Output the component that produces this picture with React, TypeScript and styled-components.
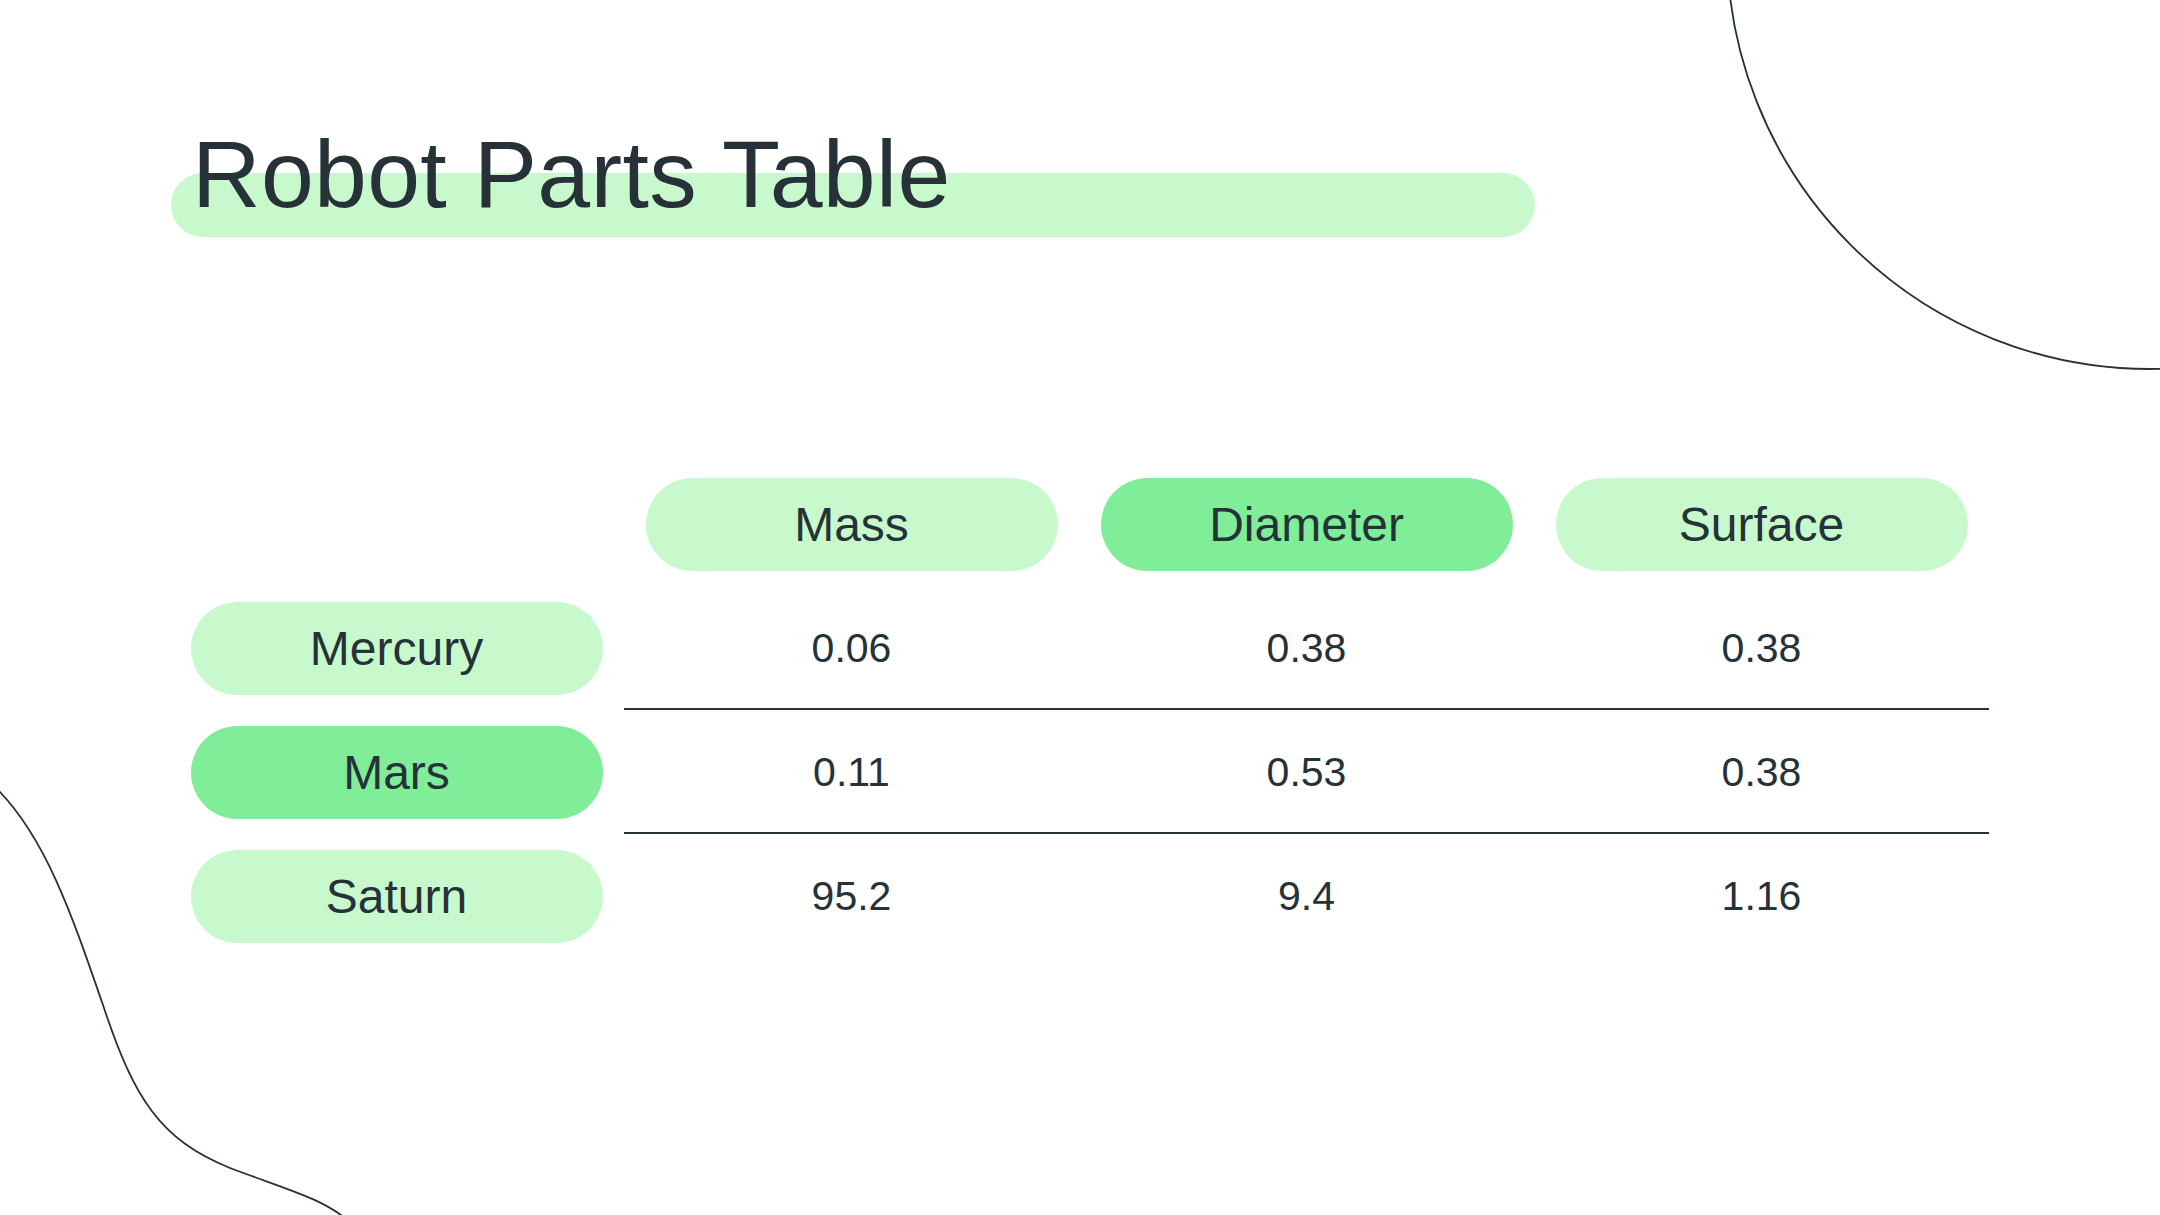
import React from 'react';
import styled, {createGlobalStyle} from 'styled-components';

const ink = '#263238';
const soft = '#c7f9cc';
const strong = '#80ed99';

const GlobalStyle = createGlobalStyle`
  html, body {
    margin: 0;
    padding: 0;
    background: #ffffff;
  }
  body {
    font-family: 'Liberation Sans', Arial, sans-serif;
    color: ${ink};
  }
`;

const Slide = styled.div`
  position: relative;
  width: 2160px;
  height: 1215px;
  overflow: hidden;
  background: #ffffff;
  padding: 127px 0 0 169px;
  box-sizing: border-box;
`;

const Decor = styled.svg`
  position: absolute;
  left: 0;
  top: 0;
  width: 2160px;
  height: 1215px;
  pointer-events: none;
`;

const TitleWrap = styled.header`
  position: relative;
  width: 1364px;
  margin-left: 2px;

  &::before {
    content: '';
    position: absolute;
    left: 0;
    top: 46px;
    width: 100%;
    height: 64px;
    border-radius: 32px;
    background: ${soft};
  }
`;

const Title = styled.h1`
  position: relative;
  margin: 0;
  padding-left: 21px;
  font-size: 95px;
  line-height: 94px;
  font-weight: 400;
  letter-spacing: 0.3px;
  color: ${ink};
`;

const Table = styled.div`
  display: grid;
  grid-template-columns: repeat(4, 455px);
  grid-auto-rows: 124px;
  margin-top: 241px;
`;

const Cell = styled.div<{$ruled?: boolean}>`
  display: flex;
  align-items: center;
  justify-content: center;
  box-sizing: border-box;
  padding-top: 2px;
  border-bottom: 2px solid ${(p) => (p.$ruled ? ink : 'transparent')};
  font-size: 41px;
  color: ${ink};
`;

const Pill = styled.div<{$strong?: boolean}>`
  width: 412px;
  height: 93px;
  border-radius: 47px;
  background: ${(p) => (p.$strong ? strong : soft)};
  display: flex;
  align-items: center;
  justify-content: center;
  font-size: 48px;
  color: ${ink};
`;

const columns = [
  {name: 'Mass', strong: false},
  {name: 'Diameter', strong: true},
  {name: 'Surface', strong: false},
];

const rows = [
  {name: 'Mercury', strong: false, values: ['0.06', '0.38', '0.38']},
  {name: 'Mars', strong: true, values: ['0.11', '0.53', '0.38']},
  {name: 'Saturn', strong: false, values: ['95.2', '9.4', '1.16']},
];

const App = () => {
  return (
    <>
      <GlobalStyle />
      <Slide>
        <Decor viewBox="0 0 2160 1215">
          <circle cx="2150" cy="-54" r="423" fill="none" stroke={ink} strokeWidth="1.8" />
          <path
            d="M -6 786 C 45 835, 72 915, 104 1008 C 134 1098, 160 1140, 230 1168 C 288 1190, 322 1198, 350 1222"
            fill="none"
            stroke={ink}
            strokeWidth="1.8"
          />
        </Decor>

        <TitleWrap>
          <Title>Robot Parts Table</Title>
        </TitleWrap>

        <Table>
          <Cell />
          {columns.map((col) => (
            <Cell key={col.name}>
              <Pill $strong={col.strong}>{col.name}</Pill>
            </Cell>
          ))}

          {rows.map((row, index) => (
            <React.Fragment key={row.name}>
              <Cell>
                <Pill $strong={row.strong}>{row.name}</Pill>
              </Cell>
              {row.values.map((value, i) => (
                <Cell key={i} $ruled={index < rows.length - 1}>
                  {value}
                </Cell>
              ))}
            </React.Fragment>
          ))}
        </Table>
      </Slide>
    </>
  );
};

export default App;
